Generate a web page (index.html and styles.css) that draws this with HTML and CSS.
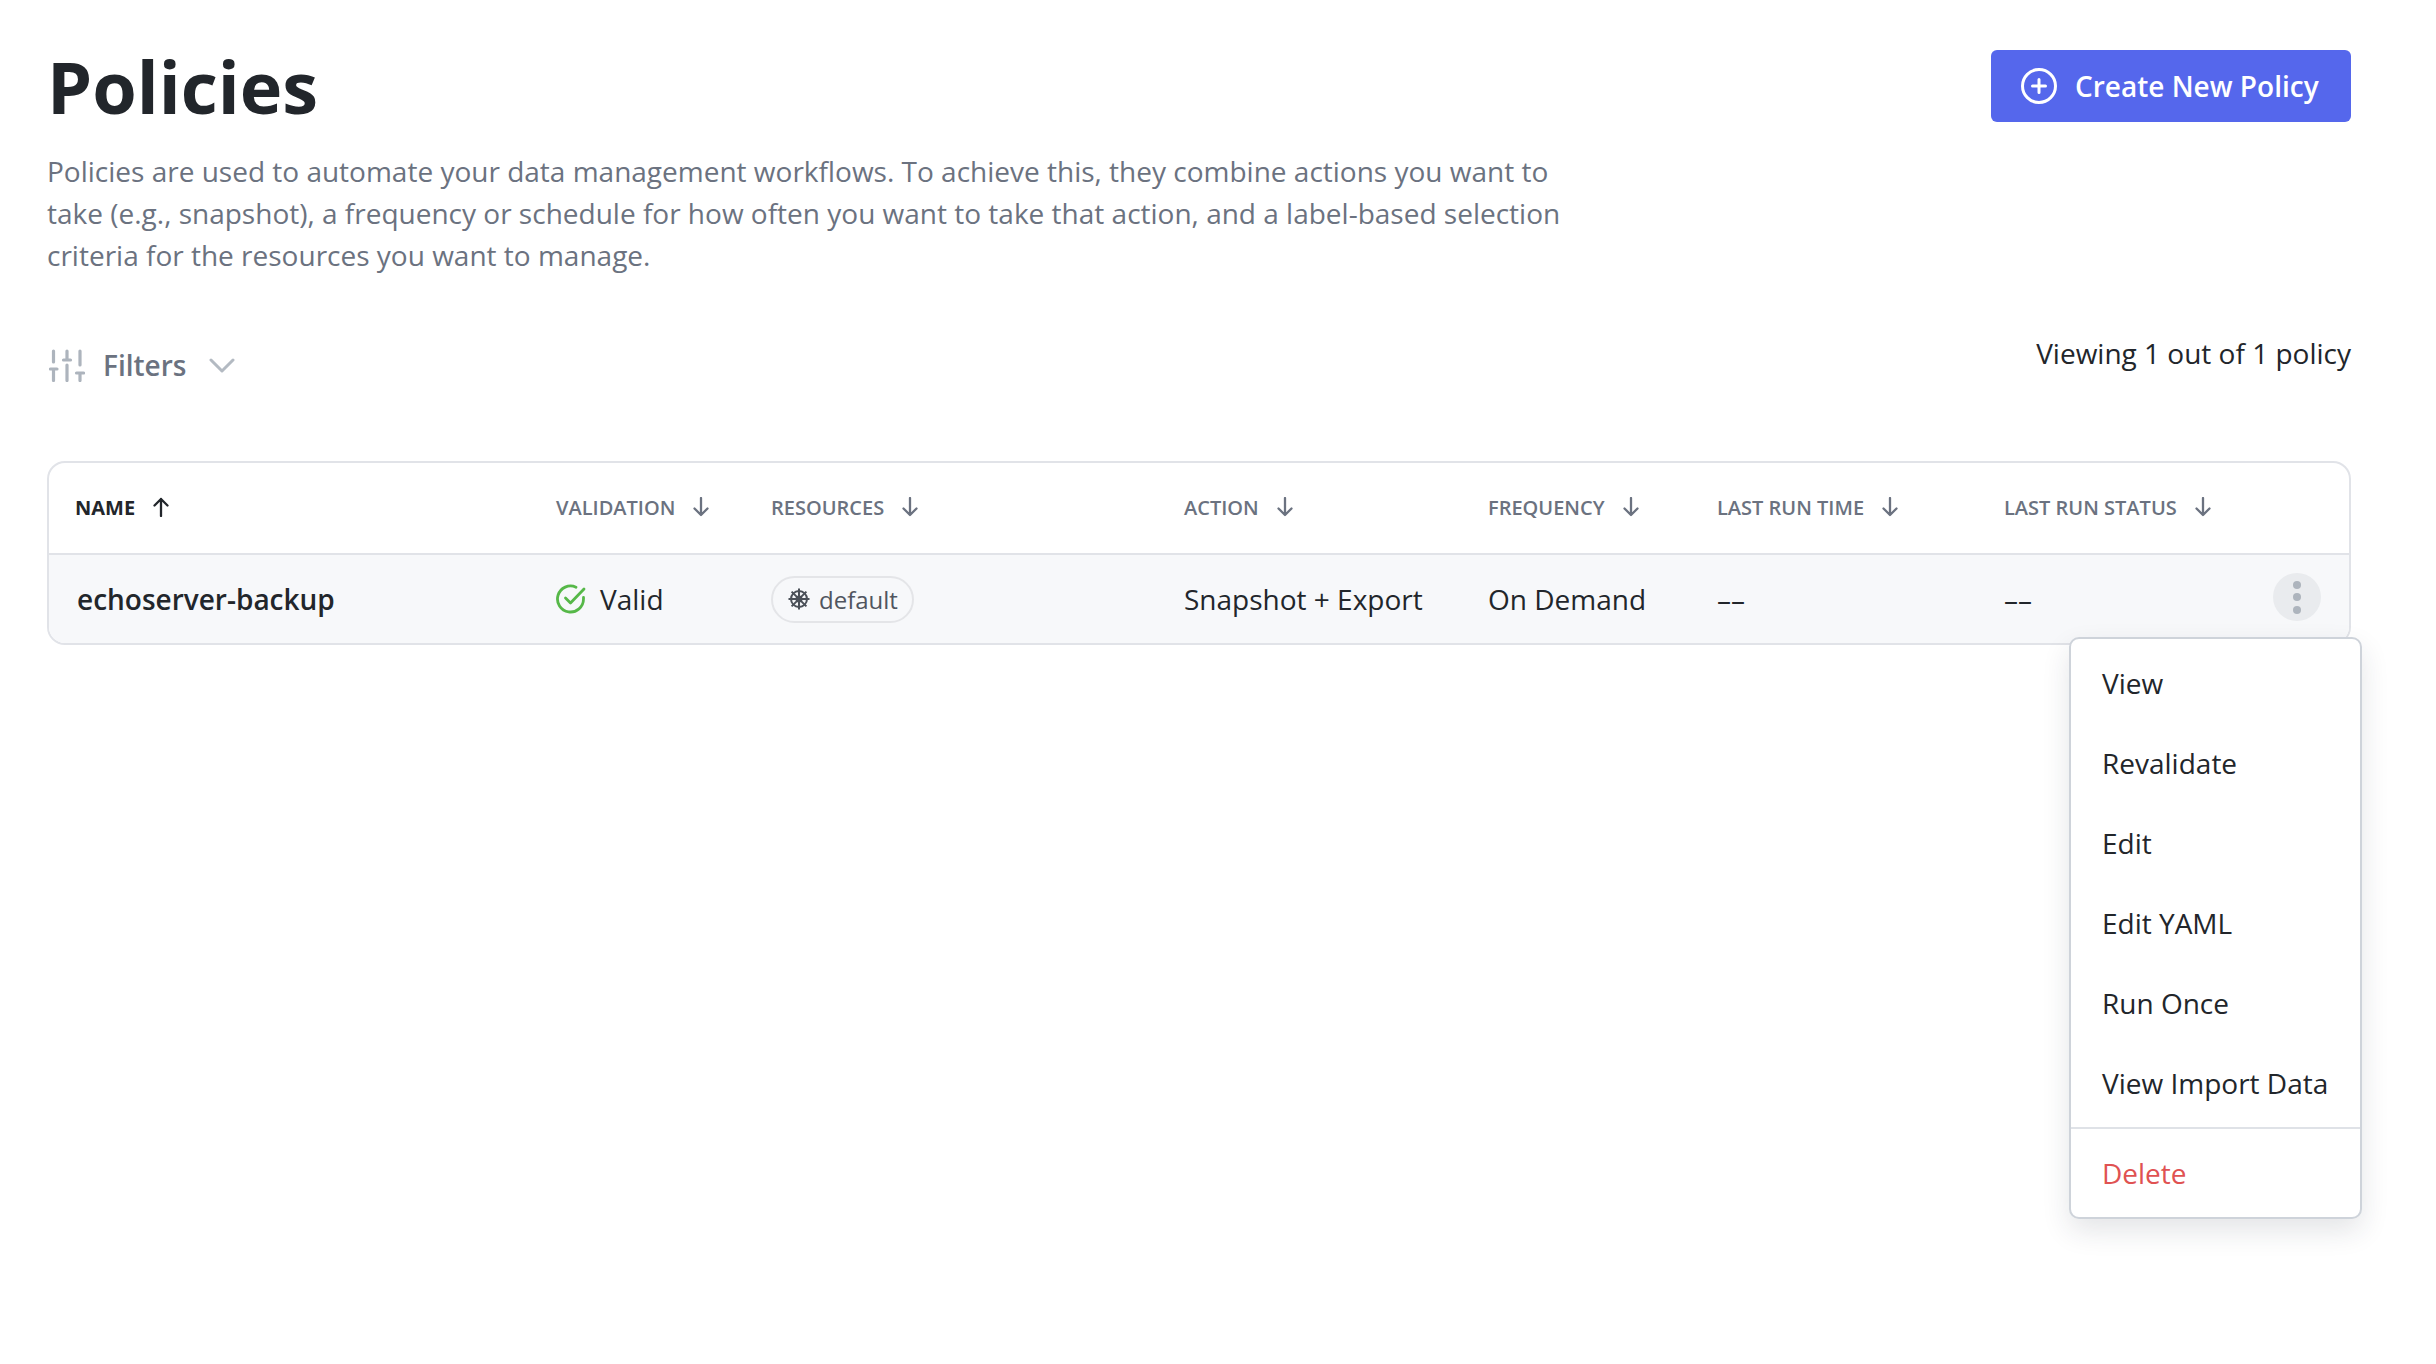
FILE: index.html
```html
<!DOCTYPE html>
<html lang="en">
<head>
<meta charset="utf-8">
<title>Policies</title>
<link rel="stylesheet" href="styles.css">
</head>
<body>
<main class="page">
  <header class="head">
    <div class="intro">
      <h1 class="title">Policies</h1>
      <p class="desc">Policies are used to automate your data management workflows. To achieve this, they combine actions you want to take (e.g., snapshot), a frequency or schedule for how often you want to take that action, and a label-based selection criteria for the resources you want to manage.</p>
    </div>
    <button class="create">
      <svg class="create-icon" viewBox="0 0 36 36" fill="none" stroke="#fff" stroke-width="3" stroke-linecap="round"><circle cx="18" cy="18" r="16.5"/><path d="M18 11.5v13M11.5 18h13"/></svg>
      <span>Create New Policy</span>
    </button>
  </header>

  <div class="toolbar">
    <div class="filters">
      <svg class="filter-icon" viewBox="0 0 36 33" fill="none" stroke="#adb4bd" stroke-width="3.200" stroke-linecap="round"><path d="M4.500 2v11M4.500 20v11.500M1.500 20h6.500M18 2v9M18 16v15.500M14.500 11h7M31 2v14M31 24v7.500M27.500 24h7"/></svg>
      <span class="filter-label">Filters</span>
      <svg class="chevron" viewBox="0 0 26 15" fill="none" stroke="#b3bac2" stroke-width="3" stroke-linecap="round" stroke-linejoin="round"><path d="M2 2l11 11L24 2"/></svg>
    </div>
    <div class="count">Viewing 1 out of 1 policy</div>
  </div>

  <section class="table">
    <div class="row row-head">
      <div class="th th-active">NAME <svg class="arrow" viewBox="0 0 18 20" fill="none" stroke="currentColor" stroke-width="2.300" stroke-linecap="round" stroke-linejoin="round"><path d="M9 19V2M2.500 8.500L9 2l6.500 6.500"/></svg></div>
      <div class="th">VALIDATION <svg class="arrow" viewBox="0 0 18 20" fill="none" stroke="currentColor" stroke-width="2.300" stroke-linecap="round" stroke-linejoin="round"><path d="M9 1v17M2.500 11.500L9 18l6.500-6.500"/></svg></div>
      <div class="th">RESOURCES <svg class="arrow" viewBox="0 0 18 20" fill="none" stroke="currentColor" stroke-width="2.300" stroke-linecap="round" stroke-linejoin="round"><path d="M9 1v17M2.500 11.500L9 18l6.500-6.500"/></svg></div>
      <div class="th">ACTION <svg class="arrow" viewBox="0 0 18 20" fill="none" stroke="currentColor" stroke-width="2.300" stroke-linecap="round" stroke-linejoin="round"><path d="M9 1v17M2.500 11.500L9 18l6.500-6.500"/></svg></div>
      <div class="th">FREQUENCY <svg class="arrow" viewBox="0 0 18 20" fill="none" stroke="currentColor" stroke-width="2.300" stroke-linecap="round" stroke-linejoin="round"><path d="M9 1v17M2.500 11.500L9 18l6.500-6.500"/></svg></div>
      <div class="th">LAST RUN TIME <svg class="arrow" viewBox="0 0 18 20" fill="none" stroke="currentColor" stroke-width="2.300" stroke-linecap="round" stroke-linejoin="round"><path d="M9 1v17M2.500 11.500L9 18l6.500-6.500"/></svg></div>
      <div class="th">LAST RUN STATUS <svg class="arrow" viewBox="0 0 18 20" fill="none" stroke="currentColor" stroke-width="2.300" stroke-linecap="round" stroke-linejoin="round"><path d="M9 1v17M2.500 11.500L9 18l6.500-6.500"/></svg></div>
      <div></div>
    </div>
    <div class="row row-body">
      <div class="td td-name">echoserver-backup</div>
      <div class="td td-valid">
        <svg class="valid-icon" viewBox="0 0 30 30" fill="none" stroke="#56b848" stroke-width="2.800" stroke-linecap="round" stroke-linejoin="round"><path d="M27.500 13.500V15A13 13 0 1 1 20 3.200"/><path d="M9.500 14l5 5L28 5"/></svg>
        <span>Valid</span>
      </div>
      <div class="td">
        <span class="chip">
          <svg class="wheel" viewBox="0 0 22 22" fill="none" stroke="#4b5058" stroke-width="2"><circle cx="11" cy="11" r="8"/><circle cx="11" cy="11" r="2.500"/><path d="M11 0.500v21M0.500 11h21M3.600 3.600l14.800 14.800M18.400 3.600L3.600 18.400"/></svg>
          <span>default</span>
        </span>
      </div>
      <div class="td">Snapshot + Export</div>
      <div class="td">On Demand</div>
      <div class="td">––</div>
      <div class="td">––</div>
      <div class="td td-actions">
        <span class="kebab"><i class="dot"></i><i class="dot"></i><i class="dot"></i></span>
      </div>
    </div>
    <nav class="menu">
      <div class="menu-list">
        <a class="menu-item">View</a>
        <a class="menu-item">Revalidate</a>
        <a class="menu-item">Edit</a>
        <a class="menu-item">Edit YAML</a>
        <a class="menu-item">Run Once</a>
        <a class="menu-item">View Import Data</a>
      </div>
      <div class="menu-foot">
        <a class="menu-item menu-danger">Delete</a>
      </div>
    </nav>
  </section>
</main>
</body>
</html>
```

FILE: styles.css
```css
* { box-sizing: border-box; }
html, body { margin: 0; background: #fff; }
body {
  font-family: "Open Sans", "Noto Sans", sans-serif;
  color: #22262b;
  height: 1364px;
  overflow: hidden;
}
.page { padding: 50px 85px 0 47px; }

.head { display: flex; justify-content: space-between; align-items: flex-start; }
.intro { width: 1530px; }
.title {
  margin: 0;
  font-size: 72px;
  line-height: 72px;
  font-weight: 700;
  color: #22262b;
}
.desc {
  margin: 28px 0 0;
  font-size: 28px;
  line-height: 42px;
  color: #6b7280;
}
.create {
  display: flex;
  align-items: center;
  gap: 18px;
  height: 72px;
  width: 360px;
  padding: 0 0 0 30px;
  border: 0;
  border-radius: 6px;
  background: #5567ec;
  color: #fff;
  font: 600 28px "Open Sans", sans-serif;
}
.create-icon { width: 36px; height: 36px; flex: none; }

.toolbar {
  display: flex;
  justify-content: space-between;
  align-items: flex-start;
  margin-top: 57px;
  height: 128px;
}
.filters { display: flex; align-items: center; padding: 13px 0 0 2px; }
.filter-icon { width: 36px; height: 33px; flex: none; }
.filter-label { margin-left: 18px; font-size: 28px; font-weight: 600; color: #6b7280; }
.chevron { width: 26px; height: 15px; margin-left: 23px; flex: none; }
.count { font-size: 28px; line-height: 40px; color: #22262b; }

.table {
  position: relative;
  border: 2px solid #e1e3e8;
  border-radius: 18px;
}
.row {
  display: grid;
  grid-template-columns: 481px 215px 413px 304px 229px 287px 1fr 76px;
  align-items: center;
  padding-left: 26px;
}
.row-head { height: 92px; padding-bottom: 2px; border-bottom: 2px solid #e1e3e8; }
.row-body { height: 88px; background: #f7f8fa; border-radius: 0 0 16px 16px; }
.th {
  display: flex;
  align-items: center;
  gap: 17px;
  font-size: 20px;
  font-weight: 600;
  color: #6b7280;
  white-space: nowrap;
}
.th-active { color: #22262b; font-weight: 700; }
.arrow { width: 18px; height: 20px; flex: none; }
.td { font-size: 28px; color: #22262b; white-space: nowrap; }
.td-name { font-weight: 600; padding-left: 2px; }
.td-valid { display: flex; align-items: center; gap: 14px; }
.valid-icon { width: 30px; height: 30px; flex: none; }
.chip {
  display: inline-flex;
  align-items: center;
  gap: 9px;
  height: 47px;
  padding: 0 14px 0 15px;
  border: 2px solid #e4e5e8;
  border-radius: 24px;
  font-size: 24px;
  color: #50555f;
}
.wheel { width: 22px; height: 22px; flex: none; }
.td-actions { display: flex; justify-content: flex-start; padding-bottom: 4px; }
.kebab {
  display: flex;
  flex-direction: column;
  align-items: center;
  justify-content: center;
  gap: 4.500px;
  width: 48px;
  height: 48px;
  border-radius: 50%;
  background: #e9ebee;
}
.dot { width: 8px; height: 8px; border-radius: 50%; background: #adb4bd; }

.menu {
  position: absolute;
  top: 174px;
  right: -13px;
  width: 293px;
  background: #fff;
  border: 2px solid #ced3da;
  border-radius: 10px;
  box-shadow: 0 12px 28px rgba(30, 40, 60, 0.12);
}
.menu-list { padding: 4px 0; }
.menu-foot { border-top: 2px solid #dfe2e7; padding: 4px 0 4px; }
.menu-item {
  display: block;
  height: 80px;
  padding-left: 31px;
  font-size: 28px;
  line-height: 80px;
  color: #22262b;
  white-space: nowrap;
}
.menu-danger { color: #e05252; }
```
